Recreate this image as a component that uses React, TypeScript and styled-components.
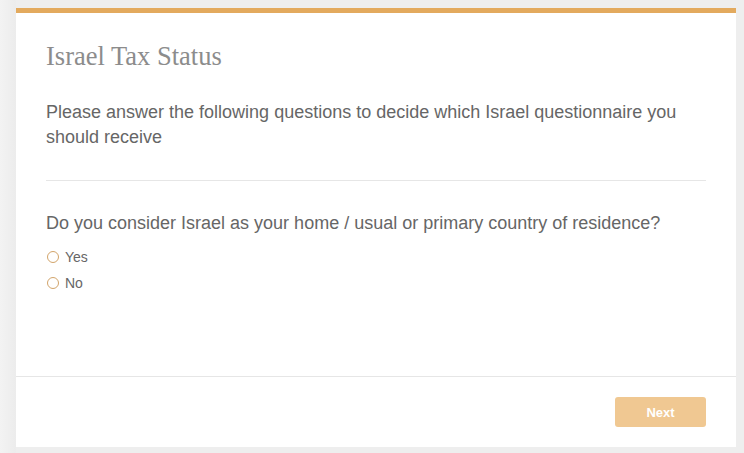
import React from "react";
import styled, { createGlobalStyle } from "styled-components";

const Global = createGlobalStyle`
  html, body { margin: 0; padding: 0; background: #eeeeee; }
  body { font-family: "Liberation Sans", Arial, sans-serif; }
`;

const Page = styled.div`
  padding: 8px 8px 6px 16px;
  height: 453px;
  box-sizing: border-box;
  background: linear-gradient(to right, #f3f3f3 0px, #ececec 16px, #eeeeee 16px);
`;

const Card = styled.div`
  background: #ffffff;
  border-top: 5px solid #e3aa5e;
  display: flex;
  flex-direction: column;
  height: 439px;
  box-sizing: border-box;
`;

const Body = styled.div`
  padding: 28px 30px 0 30px;
  flex: 1;
`;

const Title = styled.h1`
  margin: 0;
  font-family: "Liberation Serif", Georgia, serif;
  font-weight: normal;
  font-size: 26.5px;
  line-height: 30px;
  color: #8c8c8c;
`;

const Intro = styled.p`
  margin: 29px 0 0 0;
  font-size: 18px;
  line-height: 25px;
  color: #666666;
`;

const Divider = styled.hr`
  border: none;
  border-top: 1px solid #e6e6e6;
  margin: 30px 0 0 0;
`;

const Question = styled.div`
  margin-top: 30px;
  font-size: 18px;
  line-height: 25px;
  color: #666666;
`;

const Options = styled.div`
  display: flex;
  flex-direction: column;
  gap: 8px;
  margin-top: 12px;
`;

const Option = styled.label`
  display: flex;
  align-items: center;
  gap: 6px;
  font-size: 14px;
  line-height: 18px;
  color: #666666;
  padding-left: 1px;
`;

const Radio = styled.span`
  width: 10px;
  height: 10px;
  border: 1px solid #d2a46a;
  border-radius: 50%;
  box-sizing: content-box;
`;

const Footer = styled.div`
  border-top: 1px solid #e6e6e6;
  height: 71px;
  display: flex;
  justify-content: flex-end;
  align-items: flex-start;
  padding: 20px 30px 0 0;
  box-sizing: border-box;
`;

const NextButton = styled.button`
  width: 91px;
  height: 30px;
  border: none;
  border-radius: 3px;
  background: #f0c892;
  color: #ffffff;
  font-family: "Liberation Sans", Arial, sans-serif;
  font-weight: bold;
  font-size: 13px;
  cursor: pointer;
`;

export default function App() {
  return (
    <>
      <Global />
      <Page>
        <Card>
          <Body>
            <Title>Israel Tax Status</Title>
            <Intro>
              Please answer the following questions to decide which Israel questionnaire you should receive
            </Intro>
            <Divider />
            <Question>
              Do you consider Israel as your home / usual or primary country of residence?
            </Question>
            <Options>
              <Option>
                <Radio />
                Yes
              </Option>
              <Option>
                <Radio />
                No
              </Option>
            </Options>
          </Body>
          <Footer>
            <NextButton>Next</NextButton>
          </Footer>
        </Card>
      </Page>
    </>
  );
}
